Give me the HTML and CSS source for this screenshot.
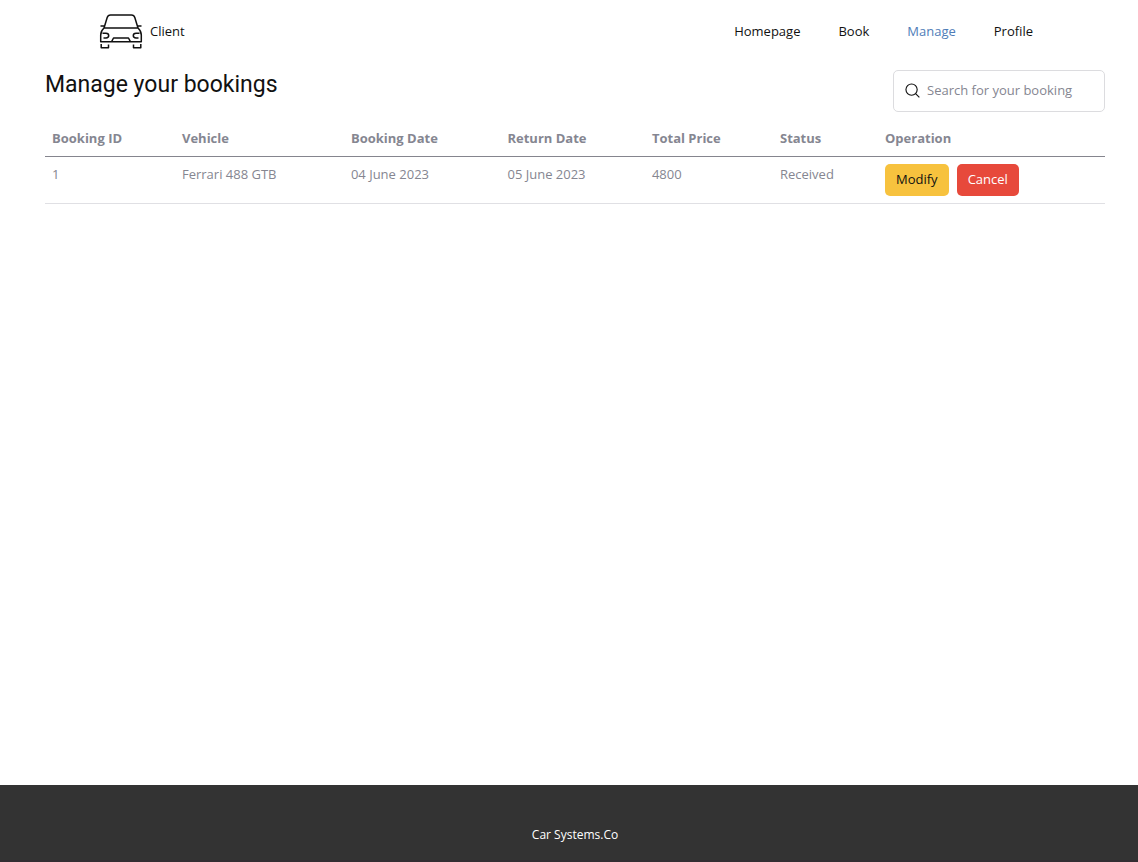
FILE: index.html
```html
<!DOCTYPE html>
<html lang="en">
<head>
<meta charset="utf-8">
<meta name="viewport" content="width=device-width, initial-scale=1">
<title>Manage your bookings</title>
<link rel="stylesheet" href="styles.css">
</head>
<body>
<header class="navbar">
  <a class="brand" href="#">
    <svg class="brand-icon" viewBox="0 0 44 36" aria-hidden="true">
      <path d="M5 15 8.200 4.500Q9 2 11.500 2H32.500Q35 2 35.800 4.500L39 15M5 15H39M5 15Q1.700 18 1.700 22V28.800H42.300V22Q42.300 18 39 15M1.500 13H5M39 13H42.500M3.500 20.200H7Q9.700 20.200 9.700 22.600 9.700 25 7 25H4.500M40.500 20.200H37Q34.300 20.200 34.300 22.600 34.300 25 37 25H39.500M12.500 28.800 14.500 25H29.500L31.500 28.800M2.200 31V34.800H9.500V31.500M34.500 31.500V34.800H41.800V31"/>
    </svg>
    <span>Client</span>
  </a>
  <nav class="nav-links">
    <a href="#">Homepage</a>
    <a href="#">Book</a>
    <a class="active" href="#" aria-current="page">Manage</a>
    <a href="#">Profile</a>
  </nav>
</header>
<main class="content">
  <div class="heading">
    <h1>Manage your bookings</h1>
    <label class="search">
      <svg class="search-icon" viewBox="0 0 16 16" aria-hidden="true">
        <circle cx="7" cy="7" r="6"/>
        <path d="M11.300 11.300 15.300 15.300"/>
      </svg>
      <input type="search" placeholder="Search for your booking" aria-label="Search for your booking">
    </label>
  </div>
  <table class="bookings">
    <colgroup>
      <col class="col-id"><col class="col-vehicle"><col class="col-start"><col class="col-return"><col class="col-price"><col class="col-status"><col>
    </colgroup>
    <thead>
      <tr><th>Booking ID</th><th>Vehicle</th><th>Booking Date</th><th>Return Date</th><th>Total Price</th><th>Status</th><th>Operation</th></tr>
    </thead>
    <tbody>
      <tr>
        <td>1</td><td>Ferrari 488 GTB</td><td>04 June 2023</td><td>05 June 2023</td><td>4800</td><td>Received</td>
        <td><div class="actions"><button class="btn btn-modify" type="button">Modify</button><button class="btn btn-cancel" type="button">Cancel</button></div></td>
      </tr>
    </tbody>
  </table>
</main>
<footer class="footer">Car Systems.Co</footer>
</body>
</html>
```
FILE: styles.css
```css
* { box-sizing: border-box; }

body {
  margin: 0;
  min-height: 100vh;
  display: flex;
  flex-direction: column;
  background: #fff;
  color: #111;
  font: 13px/20px "Open Sans", sans-serif;
}

.navbar {
  display: flex;
  align-items: center;
  justify-content: space-between;
  height: 62px;
  padding: 0 105px 0 99px;
}

.brand,
.nav-links a {
  color: #111;
  text-decoration: none;
}

.brand {
  display: flex;
  align-items: center;
  gap: 7px;
}

.brand-icon {
  width: 44px;
  height: 36px;
  fill: none;
  stroke: #111;
  stroke-width: 1.5;
  stroke-linejoin: round;
}

.nav-links {
  display: flex;
  gap: 38px;
}

.nav-links .active { color: #4f7db8; }

.content {
  flex: 1;
  padding: 8px 33px 0 45px;
}

.heading {
  display: flex;
  align-items: flex-start;
  justify-content: space-between;
  margin-bottom: 9px;
}

h1 {
  margin: 0;
  font: 400 23px/30px Roboto, sans-serif;
}

.search {
  display: flex;
  align-items: center;
  gap: 7px;
  width: 212px;
  height: 42px;
  padding: 0 11px 2px;
  border: 1px solid #dcdcdf;
  border-radius: 5px;
}

.search-icon {
  flex: none;
  width: 15px;
  height: 15px;
  fill: none;
  stroke: #111;
  stroke-width: 1.2;
}

.search input {
  flex: 1;
  min-width: 0;
  padding: 0;
  border: 0;
  outline: 0;
  background: none;
  color: #111;
  font: inherit;
}

.search input::placeholder { color: #858691; }

.bookings {
  width: 100%;
  table-layout: fixed;
  border-collapse: collapse;
  color: #858691;
}

.col-id { width: 12.26%; }
.col-vehicle { width: 15.94%; }
.col-start { width: 14.77%; }
.col-return { width: 13.63%; }
.col-price { width: 12.08%; }
.col-status { width: 9.91%; }

.bookings th,
.bookings td {
  padding: 7px;
  text-align: left;
  vertical-align: top;
}

.bookings th {
  padding-bottom: 8px;
  border-bottom: 1px solid #85858e;
  font-weight: 700;
}

.bookings td { border-bottom: 1px solid #e0e0e4; }

.actions {
  display: flex;
  gap: 8px;
}

.btn {
  height: 32px;
  padding: 0 11px 2px;
  border: 0;
  border-radius: 5px;
  font: inherit;
}

.btn-modify { background: #f7c23e; color: #111; }
.btn-cancel { background: #e7493b; color: #fff; }

.footer {
  padding: 40px 0 15px 12px;
  border-bottom: 2px solid #332d32;
  background: #333;
  color: #fff;
  font-size: 12px;
  text-align: center;
}
```
